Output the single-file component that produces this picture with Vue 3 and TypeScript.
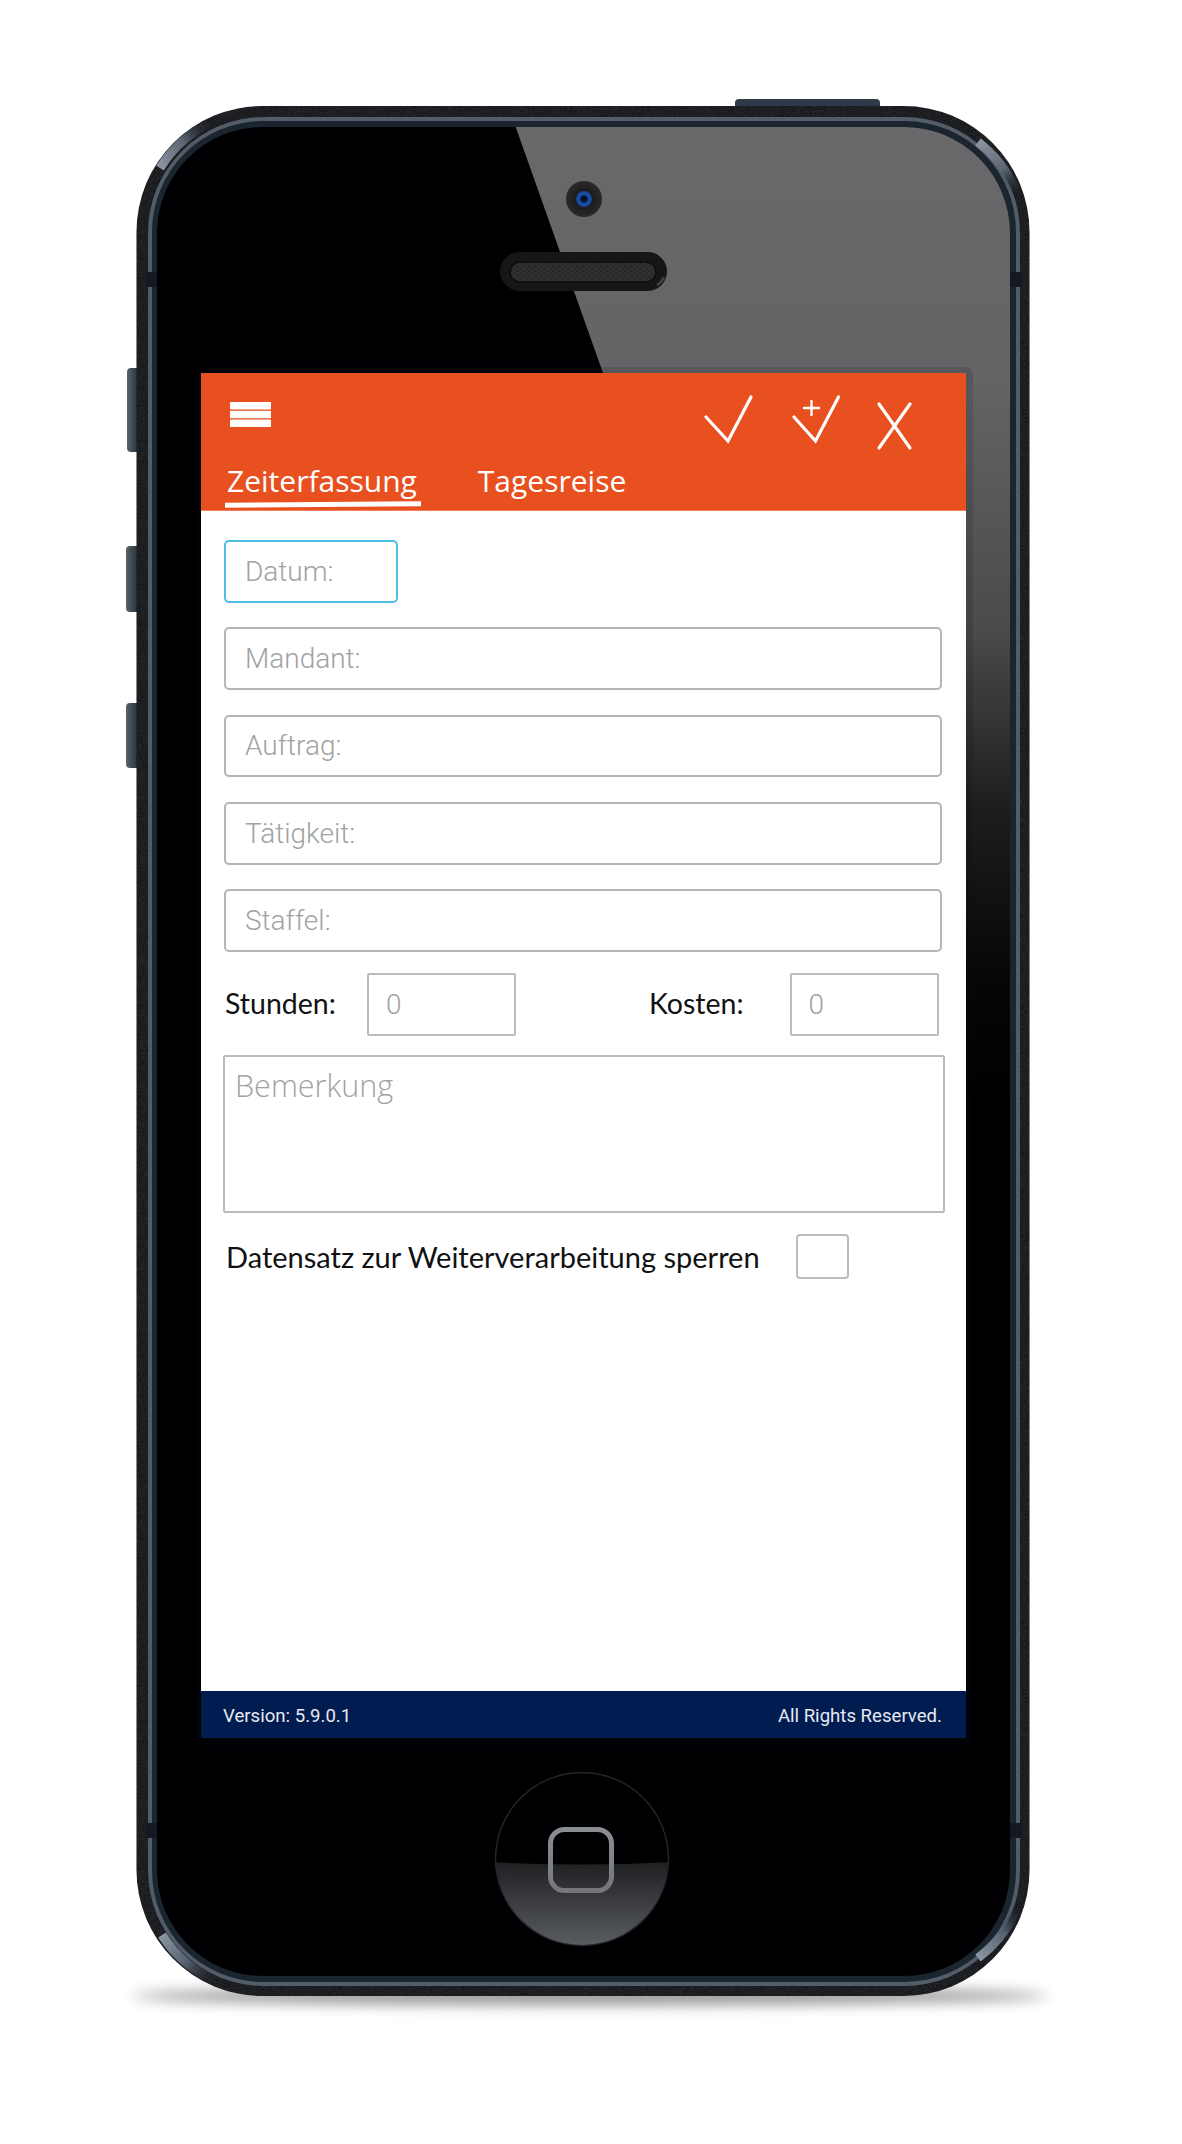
<script setup lang="ts">
interface Field {
  label: string
}

const fields: Field[] = [
  { label: 'Mandant:' },
  { label: 'Auftrag:' },
  { label: 'Tätigkeit:' },
  { label: 'Staffel:' }
]
</script>

<template>
  <div class="stage">
    <svg class="device" viewBox="0 0 1182 2144" width="1182" height="2144" aria-hidden="true">
      <defs>
        <filter id="blur-shadow" x="-10%" y="-300%" width="120%" height="700%">
          <feGaussianBlur stdDeviation="7" />
        </filter>
        <filter id="grain" x="0" y="0" width="100%" height="100%">
          <feTurbulence type="fractalNoise" baseFrequency="1.4" numOctaves="2" seed="4" />
          <feColorMatrix values="0 0 0 0 1  0 0 0 0 1  0 0 0 0 1  0 0 0 0.16 0" />
          <feComposite in2="SourceAlpha" operator="in" />
        </filter>
        <linearGradient id="gloss" x1="0" y1="127" x2="0" y2="1100" gradientUnits="userSpaceOnUse">
          <stop offset="0" stop-color="#69696b" />
          <stop offset="0.26" stop-color="#646466" />
          <stop offset="0.52" stop-color="#4a4a4c" />
          <stop offset="0.7" stop-color="#1d1d1f" />
          <stop offset="0.88" stop-color="#060608" />
          <stop offset="1" stop-color="#000003" />
        </linearGradient>
        <linearGradient id="side-key" x1="0" y1="0" x2="1" y2="0">
          <stop offset="0" stop-color="#59636c" />
          <stop offset="0.45" stop-color="#3c464e" />
          <stop offset="1" stop-color="#20272e" />
        </linearGradient>
        <linearGradient id="home-low" x1="0" y1="1862" x2="0" y2="1946" gradientUnits="userSpaceOnUse">
          <stop offset="0" stop-color="#1f2022" />
          <stop offset="0.45" stop-color="#393b3e" />
          <stop offset="1" stop-color="#5a5d61" />
        </linearGradient>
        <linearGradient id="home-key" x1="0" y1="1827" x2="0" y2="1893" gradientUnits="userSpaceOnUse">
          <stop offset="0" stop-color="#8c8f92" />
          <stop offset="1" stop-color="#74767a" />
        </linearGradient>
        <radialGradient id="lens">
          <stop offset="0" stop-color="#04070f" />
          <stop offset="0.35" stop-color="#0a1a3a" />
          <stop offset="0.65" stop-color="#1a55b4" />
          <stop offset="1" stop-color="#173f85" />
        </radialGradient>
        <radialGradient id="camera-ring">
          <stop offset="0" stop-color="#101012" />
          <stop offset="0.7" stop-color="#222224" />
          <stop offset="1" stop-color="#2a2a2c" />
        </radialGradient>
        <linearGradient id="shine-tl" x1="160" y1="168" x2="212" y2="122" gradientUnits="userSpaceOnUse">
          <stop offset="0" stop-color="#8b96a2" />
          <stop offset="0.5" stop-color="#5c6672" />
          <stop offset="1" stop-color="#20272f" stop-opacity="0" />
        </linearGradient>
        <linearGradient id="shine-tr" x1="978" y1="142" x2="1018" y2="196" gradientUnits="userSpaceOnUse">
          <stop offset="0" stop-color="#8b96a2" />
          <stop offset="0.55" stop-color="#5c6672" />
          <stop offset="1" stop-color="#20272f" stop-opacity="0" />
        </linearGradient>
        <linearGradient id="shine-bl" x1="162" y1="1935" x2="218" y2="1982" gradientUnits="userSpaceOnUse">
          <stop offset="0" stop-color="#8b96a2" />
          <stop offset="0.5" stop-color="#566070" />
          <stop offset="1" stop-color="#20272f" stop-opacity="0" />
        </linearGradient>
        <linearGradient id="shine-br" x1="978" y1="1958" x2="1018" y2="1906" gradientUnits="userSpaceOnUse">
          <stop offset="0" stop-color="#8b96a2" />
          <stop offset="0.55" stop-color="#566070" />
          <stop offset="1" stop-color="#20272f" stop-opacity="0" />
        </linearGradient>
        <clipPath id="glass">
          <rect x="157" y="127" width="853" height="1849" rx="106" />
        </clipPath>
        <clipPath id="home-clip">
          <circle cx="582" cy="1859" r="86" />
        </clipPath>
        <pattern id="mesh" width="6" height="5" patternUnits="userSpaceOnUse">
          <rect width="6" height="5" fill="#2f2f30" />
          <circle cx="1.5" cy="1.2" r="0.9" fill="#1f1f20" />
          <circle cx="4.5" cy="3.7" r="0.9" fill="#1f1f20" />
        </pattern>
      </defs>

      <!-- shadow under the phone -->
      <ellipse cx="590" cy="1996" rx="458" ry="9" fill="#000" opacity="0.42" filter="url(#blur-shadow)" />

      <!-- hardware keys -->
      <rect x="735" y="99" width="145" height="14" rx="4" fill="#2f3a48" />
      <rect x="127" y="368" width="14" height="84" rx="4" fill="url(#side-key)" />
      <rect x="126" y="546" width="15" height="66" rx="4" fill="url(#side-key)" />
      <rect x="126" y="703" width="15" height="65" rx="4" fill="url(#side-key)" />

      <!-- body -->
      <rect x="136.500" y="106" width="893" height="1890" rx="126" fill="#0a0b0f" />
      <rect x="136.500" y="106" width="893" height="1890" rx="126" fill="#fff" filter="url(#grain)" />

      <!-- metal ring -->
      <rect x="148" y="117" width="872" height="1869" rx="116" fill="#535d6a" />
      <rect x="152" y="121" width="864" height="1861" rx="111" fill="#1b252e" />

      <!-- corner highlights -->
      <path d="M160 168 A122 122 0 0 1 212 122" fill="none" stroke="url(#shine-tl)" stroke-width="9" />
      <path d="M978 142 A122 122 0 0 1 1018 196" fill="none" stroke="url(#shine-tr)" stroke-width="9" />
      <path d="M162 1935 A122 122 0 0 0 218 1982" fill="none" stroke="url(#shine-bl)" stroke-width="9" />
      <path d="M978 1958 A122 122 0 0 0 1018 1906" fill="none" stroke="url(#shine-br)" stroke-width="9" />

      <!-- antenna breaks -->
      <rect x="146" y="272" width="11" height="15" fill="#121920" />
      <rect x="146" y="1823" width="11" height="15" fill="#121920" />
      <rect x="1010" y="272" width="12" height="15" fill="#121920" />
      <rect x="1010" y="1823" width="12" height="15" fill="#121920" />

      <!-- glass -->
      <rect x="157" y="127" width="853" height="1849" rx="106" fill="#000003" />
      <polygon points="515.700,127 1012,127 1012,1522 603,373" fill="url(#gloss)" clip-path="url(#glass)" />

      <!-- camera -->
      <circle cx="584" cy="199" r="18" fill="url(#camera-ring)" />
      <circle cx="584" cy="199" r="8" fill="url(#lens)" />

      <!-- speaker -->
      <rect x="500" y="252" width="167" height="39" rx="19.500" fill="#161616" />
      <rect x="510" y="262" width="146" height="20" rx="10" fill="url(#mesh)" stroke="#0c0c0c" stroke-width="1.500" />
      <path d="M657 285 A16 16 0 0 0 664 277" fill="none" stroke="#3f3f3f" stroke-width="3" />

      <!-- dark rim round the app -->
      <rect x="195" y="367" width="778" height="1378" rx="8" fill="#0a0e18" opacity="0.14" />

      <!-- home button -->
      <circle cx="582" cy="1859" r="86.500" fill="#000002" stroke="#232426" stroke-width="1.500" />
      <path d="M490 1862 Q582 1867 674 1862 L674 1950 L490 1950 Z" fill="url(#home-low)" clip-path="url(#home-clip)" />
      <rect x="550.500" y="1829.500" width="61" height="61" rx="14" fill="none" stroke="url(#home-key)" stroke-width="5" />
    </svg>

    <main class="screen">
      <header class="app-header">
        <div class="toolbar">
          <svg class="menu-icon" width="41" height="25" viewBox="0 0 41 25" aria-hidden="true">
            <rect width="41" height="7.400" y="0" rx="0.800" />
            <rect width="41" height="7.400" y="8.800" rx="0" />
            <rect width="41" height="7.400" y="17.600" rx="0.800" />
          </svg>
          <div class="actions">
            <svg width="56" height="54" viewBox="0 0 56 54" aria-hidden="true">
              <path d="M6 25 L28 49 L51 5" />
            </svg>
            <svg width="56" height="54" viewBox="0 0 56 54" aria-hidden="true">
              <path d="M6 25 L27.500 49 L50.500 5" />
              <path class="plus" d="M16 16 H31 M23.500 9 V23" />
            </svg>
            <svg class="close-icon" width="41" height="52" viewBox="0 0 41 52" aria-hidden="true">
              <path d="M5 4 L36 48 M36 4 L5 48" />
            </svg>
          </div>
        </div>
        <nav class="tabs">
          <div class="tab tab-active">
            <span>Zeiterfassung</span>
            <i class="tab-line"></i>
          </div>
          <div class="tab"><span>Tagesreise</span></div>
        </nav>
      </header>

      <section class="content">
        <div class="field field-date">Datum:</div>
        <div v-for="field in fields" :key="field.label" class="field">{{ field.label }}</div>

        <div class="amount-row">
          <span class="label label-hours">Stunden:</span>
          <div class="amount">0</div>
          <span class="label label-costs">Kosten:</span>
          <div class="amount">0</div>
        </div>

        <div class="remark">Bemerkung</div>

        <div class="lock-row">
          <span class="lock-label">Datensatz zur Weiterverarbeitung sperren</span>
          <span class="checkbox"></span>
        </div>
      </section>

      <footer class="app-footer">
        <span>Version: 5.9.0.1</span>
        <span>All Rights Reserved.</span>
      </footer>
    </main>
  </div>
</template>

<style>
html,
body {
  background: #fff;
}
</style>

<style scoped>
.stage {
  position: relative;
  width: 1182px;
  height: 2144px;
  padding: 373px 0 0 201px;
  box-sizing: border-box;
  overflow: hidden;
  background: #fff;
}

.device {
  position: absolute;
  top: 0;
  left: 0;
}

.screen {
  position: relative;
  display: flex;
  flex-direction: column;
  width: 765px;
  height: 1365px;
  background: #fff;
}

.app-header {
  height: 138px;
  flex: none;
  background: #e8501f;
  box-sizing: border-box;
  border-bottom: 1px solid #f2825c;
}

.toolbar {
  display: flex;
  align-items: flex-start;
  height: 88px;
  padding: 19px 51px 0 29px;
  box-sizing: border-box;
}

.menu-icon {
  margin-top: 10px;
  fill: #fff;
}

.actions {
  display: flex;
  gap: 32px;
  margin-left: auto;
}

.actions path {
  fill: none;
  stroke: #fff;
  stroke-width: 3.200;
  stroke-linecap: round;
  stroke-linejoin: miter;
}

.actions path.plus {
  stroke-width: 2.400;
}

.close-icon {
  margin: 8px 0 0 -2px;
}

.tabs {
  display: flex;
  gap: 55px;
  padding-left: 24px;
}

.tab {
  display: flex;
  flex-direction: column;
  font-family: "Open Sans", sans-serif;
  font-size: 30px;
  line-height: 40px;
  color: #fff;
}

.tab span {
  padding: 0 4px 0 2px;
}

.tab-line {
  display: block;
  height: 5px;
  margin-top: 1px;
  background: #fff;
  transform: rotate(-0.5deg);
}

.content {
  flex: 1;
  display: flex;
  flex-direction: column;
  padding: 29px 24px 0 23px;
}

.field {
  display: flex;
  align-items: center;
  flex: none;
  height: 62.700px;
  margin-bottom: 24.630px;
  padding-left: 19px;
  box-sizing: border-box;
  border: 2px solid #b3b6b9;
  border-radius: 5px;
  font-family: Roboto, sans-serif;
  font-weight: 300;
  font-size: 28px;
  color: #a0a2a5;
}

.field-date {
  width: 174px;
  border-color: #4dbde8;
}

.amount-row {
  display: grid;
  grid-template-columns: 143px 148.500px 274px 149.500px;
  align-items: center;
  height: 63px;
  margin-top: -3.300px;
}

.label {
  margin-top: -3px;
  font-family: Lato, sans-serif;
  font-size: 28.500px;
  color: #111;
}

.label-hours {
  padding-left: 1px;
}

.label-costs {
  padding-left: 133.500px;
}

.amount {
  display: flex;
  align-items: center;
  height: 63px;
  padding-left: 17px;
  box-sizing: border-box;
  border: 2px solid #b9bcc0;
  border-radius: 2px;
  font-family: Roboto, sans-serif;
  font-weight: 300;
  font-size: 28px;
  color: #a0a2a5;
}

.remark {
  height: 158px;
  margin: 19px -3px 0 -1px;
  padding: 7px 10px;
  box-sizing: border-box;
  border: 2px solid #b9bcc0;
  border-radius: 2px;
  font-family: "Open Sans", sans-serif;
  font-weight: 300;
  font-size: 30.500px;
  line-height: 42px;
  color: #a0a2a5;
}

.lock-row {
  display: flex;
  align-items: center;
  height: 45px;
  margin-top: 21px;
  padding-left: 2px;
}

.lock-label {
  width: 569.600px;
  font-family: Lato, sans-serif;
  font-size: 29px;
  color: #111;
}

.checkbox {
  display: block;
  width: 53px;
  height: 45px;
  box-sizing: border-box;
  border: 2px solid #b9bcc0;
  border-radius: 4px;
}

.app-footer {
  display: flex;
  justify-content: space-between;
  align-items: center;
  flex: none;
  height: 47px;
  padding: 3px 24px 0 22px;
  box-sizing: border-box;
  background: #001c50;
  font-family: Roboto, sans-serif;
  font-size: 18.600px;
  color: #e6e9f0;
}
</style>
